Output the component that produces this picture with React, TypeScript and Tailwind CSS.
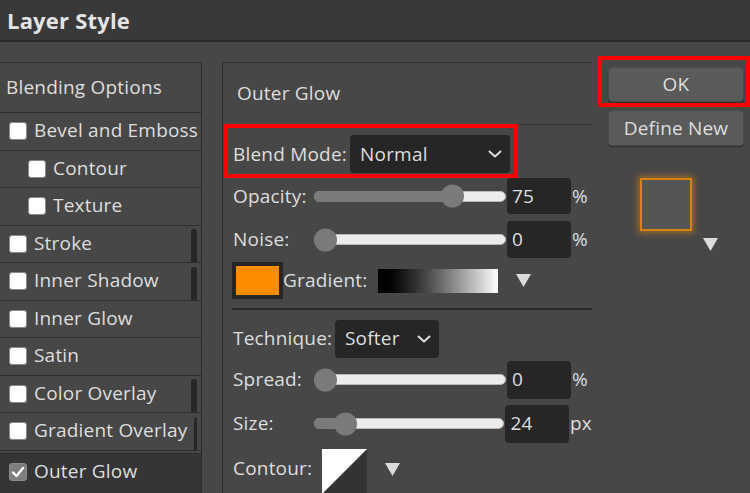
import React from "react";

function Check({ checked }: { checked?: boolean }) {
  return checked ? (
    <div className="w-[18px] h-[18px] shrink-0 rounded-[3px] bg-[#7e7e7e] border border-[#8a8a8a] flex items-center justify-center">
      <svg width="14" height="14" viewBox="0 0 14 14">
        <path d="M2 7.5 L5.5 11 L12 3" stroke="#ffffff" strokeWidth="2.4" fill="none" strokeLinecap="round" strokeLinejoin="round" />
      </svg>
    </div>
  ) : (
    <div className="w-[18px] h-[18px] shrink-0 rounded-[3px] bg-white border border-[#8a8a8a]" />
  );
}

function Chevron() {
  return (
    <svg width="14" height="8" viewBox="0 0 14 8">
      <path d="M1.5 1.5 L7 6.5 L12.5 1.5" stroke="#dddddd" strokeWidth="2" fill="none" strokeLinecap="round" strokeLinejoin="round" />
    </svg>
  );
}

function Tri() {
  return (
    <svg width="15" height="13" viewBox="0 0 15 13">
      <polygon points="0,0 15,0 7.5,13" fill="#dcdcdc" />
    </svg>
  );
}

function Slider({ pos }: { pos: number }) {
  return (
    <div className="relative w-[192px] h-[11px] rounded-full bg-[#ececec] border border-[#b8b8b8]">
      <div className="absolute left-[-1px] top-[-1px] h-[11px] rounded-full bg-[#7a7a7a]" style={{ width: pos }} />
      <div className="absolute top-1/2 -translate-y-1/2 w-[23px] h-[23px] rounded-full bg-[#7a7a7a]" style={{ left: pos - 12.5 }} />
    </div>
  );
}

function SliderRow({ label, pos, value, unit, extra }: { label: string; pos: number; value: string; unit: string; extra: string }) {
  return (
    <div className={"flex items-center pl-[10px] " + extra}>
      <div className="w-[81px]">{label}</div>
      <Slider pos={pos} />
      <div className="ml-[1px] w-[64px] h-full bg-[#262626] rounded-[4px] pl-[5px] flex items-center">{value}</div>
      <div className="ml-[1px]">{unit}</div>
    </div>
  );
}

const rows: { label: string; indent?: boolean; bar?: boolean }[] = [
  { label: "Bevel and Emboss" },
  { label: "Contour", indent: true },
  { label: "Texture", indent: true },
  { label: "Stroke", bar: true },
  { label: "Inner Shadow", bar: true },
  { label: "Inner Glow" },
  { label: "Satin" },
  { label: "Color Overlay", bar: true },
  { label: "Gradient Overlay", bar: true },
];

export default function App() {
  return (
    <div className="w-[750px] h-[493px] overflow-hidden bg-[#474747] text-[#dedede] text-[19px] tracking-[0.2px] font-['Open_Sans','Noto_Sans',sans-serif]">
      <div className="h-[42px] bg-[#393939] border-b-2 border-[#2a2a2a] flex items-center pl-[7px]">
        <span className="font-bold text-[22px] text-[#e4e4e4]">Layer Style</span>
      </div>
      <div className="flex items-stretch pt-[14px] h-[451px]">
        {/* Left list */}
        <div className="mt-[6px] w-[202px] shrink-0 border-t border-r border-[#2e2e2e] flex flex-col">
          <div className="h-[50px] border-b border-[#2e2e2e] flex items-center pl-[6px] shrink-0">Blending Options</div>
          {rows.map((r) => (
            <div
              key={r.label}
              className={
                r.indent
                  ? "h-[37.5px] shrink-0 border-b border-[#2e2e2e] flex items-center gap-[7px] pl-[28px] whitespace-nowrap"
                  : "h-[37.5px] shrink-0 border-b border-[#2e2e2e] flex items-center gap-[7px] pl-[9px] whitespace-nowrap"
              }
            >
              <Check />
              <span className="flex-1 -mt-[2px]">{r.label}</span>
              {r.bar ? <div className="self-end w-[6px] h-[33px] mr-[4px] rounded-t-[3px] bg-[#272727]" /> : null}
            </div>
          ))}
          <div className="mt-[2px] flex-1 border-t border-[#2e2e2e] bg-[#353535] flex items-start pt-[9px] gap-[7px] pl-[9px]">
            <Check checked />
            <span className="-mt-[6px]">Outer Glow</span>
          </div>
        </div>

        {/* Middle panel */}
        <div className="mt-[6px] ml-[20px] w-[370px] shrink-0 border-t border-l border-[#2e2e2e] flex flex-col">
          <div className="h-[62px] shrink-0 border-b border-[#2e2e2e] ml-[3px] pl-[11px] flex items-center">Outer Glow</div>
          <div className="-mt-[1px] ml-[1px] w-[294px] h-[54px] shrink-0 border-4 border-[#ff0000] flex items-start pl-[5px] pt-[7px]">
            <div className="w-[117px] h-[38px] flex items-center">Blend Mode:</div>
            <div className="w-[160px] h-[38px] bg-[#262626] rounded-[4px] flex items-center justify-between pl-[10px] pr-[8px]">
              <span>Normal</span>
              <Chevron />
            </div>
          </div>
          <SliderRow label="Opacity:" pos={138} value="75" unit="%" extra="h-[36px] shrink-0" />
          <SliderRow label="Noise:" pos={11} value="0" unit="%" extra="mt-[7px] h-[37px] shrink-0" />
          <div className="mt-[4px] h-[37px] shrink-0 flex items-center pl-[9px]">
            <div className="w-[51px] h-[37px] border-4 border-[#262626] bg-[#ff8c00]" />
            <div className="w-[95px]">Gradient:</div>
            <div className="w-[120px] h-[24px] bg-gradient-to-r from-black to-white" />
            <div className="ml-[18px] flex items-center"><Tri /></div>
          </div>
          <div className="mt-[9px] ml-[9px] h-[1.5px] shrink-0 bg-[#2a2a2a]" />
          <div className="mt-[10px] h-[38px] shrink-0 flex items-center pl-[10px]">
            <div className="w-[102px]">Technique:</div>
            <div className="w-[104px] h-full bg-[#262626] rounded-[4px] flex items-center justify-between pl-[10px] pr-[8px]">
              <span>Softer</span>
              <Chevron />
            </div>
          </div>
          <SliderRow label="Spread:" pos={11} value="0" unit="%" extra="mt-[3px] h-[38px] shrink-0" />
          <SliderRow label="Size:" pos={32} value="24" unit="px" extra="mt-[6px] h-[38px] shrink-0" />
          <div className="mt-[6px] h-[45px] shrink-0 flex items-start pl-[10px]">
            <div className="w-[89px] h-[40px] flex items-center">Contour:</div>
            <svg width="45" height="45" viewBox="0 0 45 45">
              <rect x="0" y="0" width="45" height="45" fill="#333333" />
              <polygon points="0,0 45,0 0,45" fill="#ffffff" />
            </svg>
            <div className="ml-[18px] mt-[14px] flex"><Tri /></div>
          </div>
        </div>

        {/* Right column */}
        <div className="ml-[6px] flex flex-col shrink-0">
          <div className="w-[152px] h-[51px] border-4 border-[#ff0000] pl-[6px] pt-[7px]">
            <div className="w-[136px] h-[35px] bg-[#5a5a5a] rounded-[4px] border border-[#4c4c4c] shadow-[0_1px_1px_rgba(0,0,0,0.35)] flex items-center justify-center">OK</div>
          </div>
          <div className="mt-[3px] ml-[10px] w-[136px] h-[36px] bg-[#5a5a5a] rounded-[4px] border border-[#4c4c4c] shadow-[0_1px_1px_rgba(0,0,0,0.35)] flex items-center justify-center">Define New</div>
          <div className="mt-[32px] ml-[42px] w-[52px] h-[53px] bg-[#555555] border-2 border-[#d9820f] shadow-[0_0_6px_2px_rgba(224,138,26,0.55)]" />
          <div className="mt-[7px] ml-[105px] flex"><Tri /></div>
        </div>
      </div>
    </div>
  );
}
